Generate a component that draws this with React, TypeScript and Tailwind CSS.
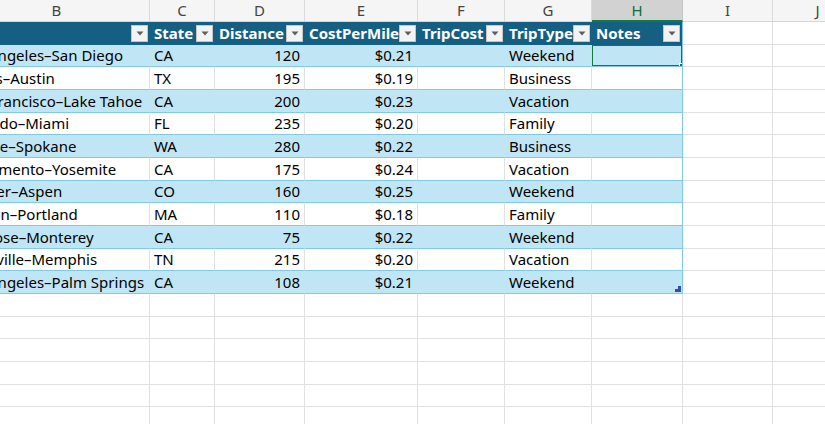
import React from "react";

const cols = [
  { letter: "B", w: "w-[186px]" },
  { letter: "C", w: "w-[65px]" },
  { letter: "D", w: "w-[90px]" },
  { letter: "E", w: "w-[113px]" },
  { letter: "F", w: "w-[87px]" },
  { letter: "G", w: "w-[87px]" },
  { letter: "H", w: "w-[91px]" },
  { letter: "I", w: "w-[90px]" },
  { letter: "J", w: "w-[90px]" },
];

const headers = ["", "State", "Distance", "CostPerMile", "TripCost", "TripType", "Notes"];

const data: [string, string, string, string, string][] = [
  ["Los Angeles–San Diego", "CA", "120", "$0.21", "Weekend"],
  ["Dallas–Austin", "TX", "195", "$0.19", "Business"],
  ["San Francisco–Lake Tahoe", "CA", "200", "$0.23", "Vacation"],
  ["Orlando–Miami", "FL", "235", "$0.20", "Family"],
  ["Seattle–Spokane", "WA", "280", "$0.22", "Business"],
  ["Sacramento–Yosemite", "CA", "175", "$0.24", "Vacation"],
  ["Denver–Aspen", "CO", "160", "$0.25", "Weekend"],
  ["Boston–Portland", "MA", "110", "$0.18", "Family"],
  ["San Jose–Monterey", "CA", "75", "$0.22", "Weekend"],
  ["Nashville–Memphis", "TN", "215", "$0.20", "Vacation"],
  ["Los Angeles–Palm Springs", "CA", "108", "$0.21", "Weekend"],
];

const heights = [
  "h-[23px]", "h-[22px]", "h-[23px]", "h-[23px]", "h-[22px]", "h-[23px]", "h-[23px]", "h-[22px]", "h-[23px]",
  "h-[23px]", "h-[22px]", "h-[23px]", "h-[23px]", "h-[22px]", "h-[23px]", "h-[23px]", "h-[22px]", "h-[23px]",
];

const font = { fontFamily: "'Noto Sans', 'Liberation Sans', sans-serif" };

function FilterButton() {
  return (
    <div className="absolute right-[2px] top-[3px] w-[17px] h-[17px] bg-[#f3f3f3] border border-[#c6c6c6] flex items-center justify-center">
      <svg width="8" height="5" viewBox="0 0 8 5">
        <path d="M0.5 0.5 L7.5 0.5 L4 4.5 Z" fill="#5f5f5f" />
      </svg>
    </div>
  );
}

export default function App() {
  return (
    <div className="w-[825px] h-[424px] overflow-hidden bg-white text-[15px] text-black" style={font}>
      <div className="-ml-[36px] w-[900px]">
        <div className="flex h-[22px]">
          {cols.map((c) => (
            <div
              key={c.letter}
              className={`${c.w} shrink-0 h-full flex items-center justify-center border-r ${
                c.letter === "H"
                  ? "bg-[#d2d2d2] text-[#0f6b3a] border-b-2 border-b-[#107c41] border-r-[#c4c4c4]"
                  : "bg-[#f5f5f5] text-[#444] border-b border-b-[#d6d6d6] border-r-[#dadada]"
              }`}
            >
              {c.letter}
            </div>
          ))}
        </div>

        <div className={`flex ${heights[0]}`}>
          {cols.map((c, i) =>
            i < 7 ? (
              <div
                key={c.letter}
                className={`${c.w} shrink-0 relative bg-[#156082] text-white font-bold flex items-center pl-[4px] ${
                  i === 6 ? "border-r border-r-[#7fcaea]" : ""
                }`}
              >
                {headers[i]}
                <FilterButton />
              </div>
            ) : (
              <div key={c.letter} className={`${c.w} shrink-0 border-r border-b border-[#e1e1e1]`} />
            )
          )}
        </div>

        {data.map((r, ri) => {
          const blue = ri % 2 === 0;
          const last = ri === data.length - 1;
          const h = heights[ri + 1];
          return (
            <div key={ri} className={`flex ${h}`}>
              {cols.map((c, i) => {
                if (i >= 7) {
                  return <div key={c.letter} className={`${c.w} shrink-0 border-r border-b border-[#e1e1e1]`} />;
                }
                const bg = blue ? "bg-[#c0e6f5]" : "bg-white";
                const vline = i === 6 ? "border-r-[#7fcaea]" : blue ? "border-r-[#c0e6f5]" : "border-r-[#e1e1e1]";
                let content: React.ReactNode = null;
                let align = "justify-start pl-[4px]";
                if (i === 1) content = r[1];
                else if (i === 2) {
                  content = r[2];
                  align = "justify-end pr-[4px]";
                } else if (i === 3) {
                  content = r[3];
                  align = "justify-end pr-[4px]";
                } else if (i === 5) content = r[4];
                return (
                  <div
                    key={c.letter}
                    className={`${c.w} shrink-0 relative ${bg} border-r ${vline} border-b border-b-[#7fcaea] flex items-center whitespace-nowrap overflow-hidden ${i === 0 ? "" : align}`}
                  >
                    {i === 0 ? (
                      <span className="absolute left-[-4px] whitespace-nowrap">{r[0]}</span>
                    ) : (
                      content
                    )}
                    {i === 6 && ri === 0 && (
                      <div className="absolute -left-[1px] -top-[1px] right-[-1px] bottom-[-1px] border-2 border-[#107c41]">
                        <div className="absolute -right-[3px] -bottom-[3px] w-[5px] h-[5px] bg-[#107c41] border border-white" />
                      </div>
                    )}
                    {i === 6 && last && (
                      <svg className="absolute right-[1px] bottom-[1px]" width="6" height="6" viewBox="0 0 6 6">
                        <path d="M6 0 L6 6 L0 6 L0 3 L3 3 L3 0 Z" fill="#3b4aa6" />
                      </svg>
                    )}
                  </div>
                );
              })}
            </div>
          );
        })}

        {heights.slice(12).map((h, k) => (
          <div key={k} className={`flex ${h}`}>
            {cols.map((c) => (
              <div key={c.letter} className={`${c.w} shrink-0 border-r border-b border-[#e1e1e1]`} />
            ))}
          </div>
        ))}
      </div>
    </div>
  );
}
